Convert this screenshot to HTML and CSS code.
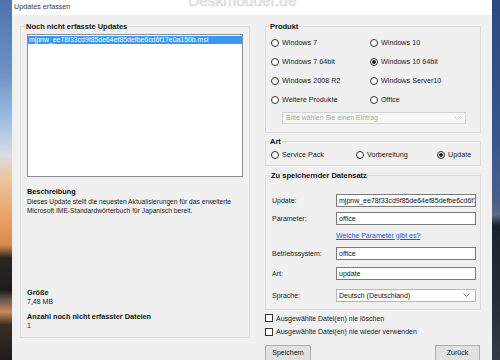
FILE: index.html
```html
<!DOCTYPE html>
<html lang="de">
<head>
<meta charset="utf-8">
<title>Updates erfassen</title>
<link rel="stylesheet" href="styles.css">
</head>
<body>
<div class="desk desk-left"></div>
<div class="window">
  <div class="titlebar">
    <span class="title">Updates erfassen</span>
    <span class="watermark">Deskmodder.de</span>
  </div>
  <div class="content">
    <fieldset class="group group-left">
      <legend>Noch nicht erfasste Updates</legend>
      <div class="listbox">
        <div class="list-item selected">mjpnw_ee78f33cd9f85de64ef85defbe6cd6f17e0a150b.msi</div>
      </div>
      <div class="heading desc-head">Beschreibung</div>
      <div class="desc">Dieses Update stellt die neuesten Aktualisierungen für das erweiterte Microsoft IME-Standardwörterbuch für Japanisch bereit.</div>
      <div class="heading size-head">Größe</div>
      <div class="value">7,48 MB</div>
      <div class="heading count-head">Anzahl noch nicht erfasster Dateien</div>
      <div class="value">1</div>
    </fieldset>

    <div class="right">
      <fieldset class="group group-product">
        <legend>Produkt</legend>
        <div class="radio-grid">
          <div class="radio"><span class="circle"></span>Windows 7</div>
          <div class="radio"><span class="circle"></span>Windows 10</div>
          <div class="radio"><span class="circle"></span>Windows 7 64bit</div>
          <div class="radio"><span class="circle checked"></span>Windows 10 64bit</div>
          <div class="radio"><span class="circle"></span>Windows 2008 R2</div>
          <div class="radio"><span class="circle"></span>Windows Server10</div>
          <div class="radio"><span class="circle"></span>Weitere Produkte</div>
          <div class="radio"><span class="circle"></span>Office</div>
        </div>
        <div class="combo disabled">
          <span>Bitte wählen Sie einen Eintrag</span>
          <svg class="chev" width="7" height="4" viewBox="0 0 7 4"><path d="M0.5 0.5 L3.5 3.5 L6.5 0.5" fill="none" stroke="#c4c4c4" stroke-width="0.8"/></svg>
        </div>
      </fieldset>

      <fieldset class="group group-art">
        <legend>Art</legend>
        <div class="radio-row">
          <div class="radio r-sp"><span class="circle"></span>Service Pack</div>
          <div class="radio r-vb"><span class="circle"></span>Vorbereitung</div>
          <div class="radio"><span class="circle checked"></span>Update</div>
        </div>
      </fieldset>

      <fieldset class="group group-data">
        <legend>Zu speichernder Datensatz</legend>
        <div class="field f-update"><span class="label">Update:</span><span class="input">mjpnw_ee78f33cd9f85de64ef85defbe6cd6f17e0a150b.msi</span></div>
        <div class="field f-param"><span class="label">Parameter:</span><span class="input">office</span></div>
        <div class="link-row"><a class="link" href="#">Welche Parameter gibt es?</a></div>
        <div class="field f-os"><span class="label">Betriebssystem:</span><span class="input">office</span></div>
        <div class="field f-art"><span class="label">Art:</span><span class="input">update</span></div>
        <div class="field f-lang"><span class="label">Sprache:</span>
          <span class="input combo-box"><span>Deutsch (Deutschland)</span>
            <svg class="chev" width="7" height="4" viewBox="0 0 7 4"><path d="M0.5 0.5 L3.5 3.5 L6.5 0.5" fill="none" stroke="#555" stroke-width="0.8"/></svg>
          </span>
        </div>
      </fieldset>

      <div class="check cb1"><span class="box"></span>Ausgewählte Datei(en) nie löschen</div>
      <div class="check cb2"><span class="box"></span>Ausgewählte Datei(en) nie wieder verwenden</div>

      <div class="buttons">
        <span class="button b-save">Speichern</span>
        <span class="button b-back">Zurück</span>
      </div>
    </div>
  </div>
</div>
<div class="desk desk-right"></div>
</body>
</html>
```

FILE: styles.css
```css
* { box-sizing: border-box; }

html, body {
  margin: 0;
  padding: 0;
}

body {
  width: 500px;
  height: 360px;
  overflow: hidden;
  display: flex;
  font-family: "Liberation Sans", Arial, sans-serif;
  font-size: 7px;
  color: #1a1a1a;
}

.desk { height: 360px; flex: none; }

.desk-left {
  width: 12px;
  background: linear-gradient(to bottom,
    #4f73ad 0px, #6b8fc6 70px, #9fbde0 120px, #d8dde2 155px,
    #e9c9a6 175px, #e9a46a 215px, #d98a4e 245px,
    #2c2622 258px, #1c1b1c 290px, #6a5a4c 300px, #c98a58 312px,
    #3a2d24 325px, #201c1c 360px);
}

.desk-right {
  width: 8px;
  background: linear-gradient(to bottom,
    #2c4a82 0px, #34548c 120px, #485f8a 200px, #5b6a85 215px,
    #1d232e 225px, #262c38 300px, #353b46 360px);
}

.window {
  width: 480px;
  height: 360px;
  flex: none;
  display: flex;
  flex-direction: column;
  background: #f0f0f0;
}

.titlebar {
  position: relative;
  height: 15px;
  flex: none;
  background: #ffffff;
  padding-left: 2px;
  line-height: 13px;
  font-size: 7.2px;
  color: #3a3a3a;
  overflow: hidden;
}

.watermark {
  position: absolute;
  left: 176px;
  top: -8px;
  font-size: 15.5px;
  line-height: 17px;
  color: #efefef;
  -webkit-text-stroke: 0.6px #d6d6d6;
}

.content {
  display: flex;
  gap: 15px;
  padding: 7px 11px 0 8px;
}

/* group boxes */
.group {
  margin: 0;
  border: 1px solid #dcdcdc;
  min-width: 0;
}

.group legend {
  font-weight: bold;
  font-size: 7.5px;
  line-height: 9px;
  padding: 0 1px;
  margin-left: -2px;
  color: #111;
}

.group-left {
  width: 230px;
  height: 316px;
  flex: none;
  padding: 0 6px 6px;
}

.listbox {
  margin-top: 2.5px;
  height: 143px;
  border: 1px solid #8a8f97;
  background: #ffffff;
  padding: 1px 0 0 0;
}

.list-item {
  height: 8px;
  line-height: 8px;
  padding-left: 1px;
  font-size: 6.9px;
}

.list-item.selected {
  background: #3a97f3;
  color: #ffffff;
}

.heading {
  font-weight: bold;
  font-size: 7.3px;
  line-height: 9px;
  color: #111;
}

.desc-head { margin-top: 10.5px; }

.desc {
  margin-top: 1px;
  line-height: 9px;
  font-size: 6.7px;
  color: #222;
  padding-right: 4px;
}

.size-head { margin-top: 73px; }

.count-head { margin-top: 6px; }

.value {
  line-height: 9px;
  font-size: 7px;
  color: #222;
}

/* right column */
.right {
  width: 216px;
  flex: none;
  display: flex;
  flex-direction: column;
}

.group-product { padding: 0 5px 8px 5px; }

.radio-grid {
  display: grid;
  grid-template-columns: 99px auto;
  row-gap: 9px;
  margin-top: 6.5px;
}

.radio {
  display: flex;
  align-items: center;
  height: 10px;
  gap: 3px;
  font-size: 7.2px;
  white-space: nowrap;
}

.circle {
  width: 8px;
  height: 8px;
  border: 1px solid #333;
  border-radius: 50%;
  background: #fff;
  flex: none;
  display: flex;
  align-items: center;
  justify-content: center;
}

.circle.checked::after {
  content: "";
  width: 4px;
  height: 4px;
  border-radius: 50%;
  background: #222;
}

.combo {
  display: flex;
  align-items: center;
  justify-content: space-between;
  height: 12px;
  padding: 0 4px 0 3px;
  font-size: 6.9px;
}

.combo.disabled {
  margin: 7px 0 0 11px;
  width: 184px;
  background: #f7f7f7;
  border: 1px solid #d4d4d4;
  color: #a8a8a8;
}

.group-art {
  margin-top: 4px;
  padding: 0 5px 5px 5px;
}

.radio-row {
  display: flex;
  margin-top: 4px;
}

.r-sp { width: 85px; }
.r-vb { width: 81px; }

.group-data {
  margin-top: 5.5px;
  padding: 0 3px 7px 6px;
}

.field {
  display: flex;
  align-items: center;
}

.label {
  width: 64px;
  flex: none;
  font-size: 7px;
  color: #222;
}

.input {
  width: 140px;
  height: 13px;
  border: 1px solid #7a7a7a;
  background: #ffffff;
  padding: 0 2px;
  line-height: 11px;
  font-size: 7px;
  white-space: nowrap;
  overflow: hidden;
  color: #111;
}

.f-update { margin-top: 14px; }
.f-param { margin-top: 5px; }
.f-os { margin-top: 7px; }
.f-art { margin-top: 7px; }
.f-lang { margin-top: 9px; }

.combo-box {
  display: flex;
  align-items: center;
  justify-content: space-between;
  border-color: #b5b5b5;
  padding-right: 5px;
}

.link-row {
  margin-top: 5.5px;
  padding-left: 64px;
  line-height: 9px;
}

.link {
  color: #0a62d6;
  font-size: 7px;
}

.check {
  display: flex;
  align-items: center;
  gap: 3px;
  height: 10px;
  font-size: 7px;
  color: #222;
}

.cb1 { margin-top: 3.5px; }
.cb2 { margin-top: 3.5px; }

.box {
  width: 8px;
  height: 8px;
  border: 1px solid #333;
  background: #fff;
  flex: none;
}

.buttons {
  display: flex;
  justify-content: space-between;
  margin-top: 8px;
  padding-right: 1px;
}

.button {
  height: 17px;
  border: 1px solid #adadad;
  background: #e1e1e1;
  text-align: center;
  line-height: 14px;
  font-size: 7px;
  color: #111;
}

.b-save { width: 46px; }
.b-back { width: 45px; }
```
